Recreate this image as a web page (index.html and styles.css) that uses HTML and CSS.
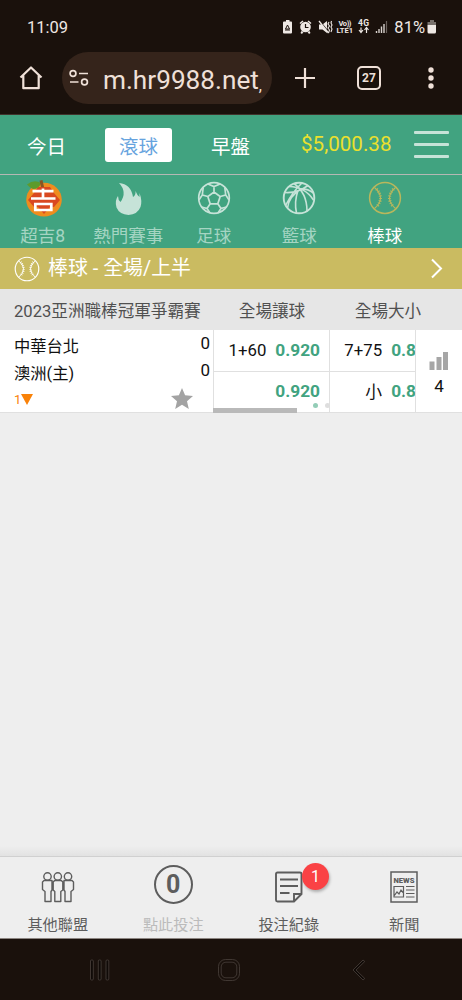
FILE: index.html
```html
<!DOCTYPE html>
<html lang="zh-Hant">
<head>
<meta charset="utf-8">
<meta name="viewport" content="width=device-width">
<title>棒球 - 全場/上半</title>
<link rel="stylesheet" href="styles.css">
</head>
<body>
<svg class="defs" width="0" height="0">
  <symbol id="baseball" viewBox="0 0 34 34">
    <g fill="none" stroke="currentColor"><circle cx="17" cy="17" r="15.4" stroke-width="1.5"/>
    <path d="M6.500 6.500Q18.500 17 6.500 27.500M27.500 6.500Q15.500 17 27.500 27.500" stroke-width="1.100"/>
    <path d="M8.500 8Q16.500 17 8.500 26M25.500 8Q17.500 17 25.500 26" stroke-width="3" stroke-dasharray="1 1.500"/></g>
  </symbol>
</svg>
<div class="phone">
  <header class="status">
    <span class="time">11:09</span>
    <svg class="status-icons" width="108" height="18" viewBox="0 0 108 18">
      <g fill="#eee8e4">
        <path d="M3 2.500h2V1h3.500v1.500h2v12H3Q2 14.500 2 13.500v-10Q2 2.500 3 2.500zM10 2.500q1 0 1 1v10q0 1-1 1z"/>
        <circle cx="24.500" cy="8" r="5.300"/><path d="M18.500 4l3-2.500 1 1-3 2.500zM30.500 4l-3-2.500-1 1 3 2.500zM20.500 12l2 1-1.500 2-1.500-1zM28.500 12l-2 1 1.500 2 1.500-1z"/>
        <path d="M38 5.500h3.500L46 2v12l-4.500-3.500H38z"/>
      </g>
      <path d="M4.500 10l2-4 2 4zM4 11h5" fill="none" stroke="#1a110c"/>
      <path d="M24.500 5v3.500h3" fill="none" stroke="#1a110c" stroke-width="1.200"/>
      <path d="M39 2.500l9 11" stroke="#1a110c" stroke-width="1.200"/>
      <path d="M38 2l9.500 12" stroke="#eee8e4" stroke-width="1.300"/>
      <path d="M48 3l-1 2 1.500 2-1.500 2 1.500 2-1 3M50.500 2l-.5 2 1 2-1 2 1 2-1 3" fill="none" stroke="#eee8e4" stroke-width="1.100"/>
      <g fill="#eee8e4" font-family="Roboto,sans-serif" font-weight="700"><text x="57.500" y="6.700" font-size="7.500" textLength="13">Vo))</text><text x="55.500" y="14.200" font-size="8" textLength="16.500" lengthAdjust="spacingAndGlyphs">LTE1</text><text x="77" y="7.200" font-size="8.500" textLength="11">4G</text></g>
      <path d="M80 8.500v5M78 11l2 2.500 2-2.500M85.500 14V9M83.500 11l2-2.500 2 2.500" fill="none" stroke="#eee8e4" stroke-width="1.200"/>
      <path d="M95.500 14v-2M98 14v-4M100.500 14V7.500M103 14V5" stroke="#d8d1cd" stroke-width="1.400"/><path d="M105.500 14V2" stroke="#6b625d" stroke-width="1.200"/>
    </svg>
    <span class="percent">81%</span>
    <svg width="10" height="15" viewBox="0 0 10 15"><path d="M3 0h4v2h2v3H.5V2H3z" fill="#77706b"/><path d="M.5 5H9v7q0 1.500-1.500 1.500H2Q.5 13.500.5 12z" fill="#eee8e4"/></svg>
  </header>
  <div class="browser">
    <svg class="home" width="24" height="24" viewBox="0 0 24 24"><path d="M1.500 11.500L12 1.500l10.500 10M4.300 9.500v12.700h15.400V9.500" fill="none" stroke="#efe0d8" stroke-width="2.200" stroke-linejoin="round"/></svg>
    <div class="url">
      <svg width="20" height="18" viewBox="0 0 20 18"><g fill="none" stroke="#efe0d8" stroke-width="1.700"><circle cx="4" cy="4.500" r="2.900"/><path d="M10 4.500h9M1 13h8.500"/><circle cx="15.500" cy="13" r="2.900"/></g></svg>
      <span class="host">m.hr9988.net</span><span class="cut">,</span>
    </div>
    <svg class="plus" width="22" height="22" viewBox="0 0 22 22"><path d="M11 1v20M1 11h20" stroke="#efe0d8" stroke-width="2.200"/></svg>
    <span class="tabs">27</span>
    <svg width="8" height="24" viewBox="0 0 8 24"><g fill="#efe0d8"><circle cx="4" cy="4" r="2.700"/><circle cx="4" cy="12" r="2.700"/><circle cx="4" cy="20" r="2.700"/></g></svg>
  </div>

  <nav class="top">
    <span class="day">今日</span><span class="day on">滾球</span><span class="day">早盤</span>
    <span class="money">$5,000.38</span>
    <span class="burger"><i></i><i></i><i></i></span>
  </nav>
  <nav class="sports">
    <div class="sport">
      <svg class="orange" width="38" height="37" viewBox="0 0 38 37"><ellipse cx="20" cy="19.700" rx="17.800" ry="16.900" fill="#ef8c1e"/><path d="M4 20l6-7 4-6h12l4 6 6 7-6 7h-4l-6 7-6-7h-4z" fill="#d94820"/><path d="M3 4.500Q10-1 17 3q-2 6-8 6Q6 8 3 4.500z" fill="#5d9b2c"/><path d="M15.500.8l3-.8 1.500 7h-3z" fill="#895522"/><path d="M8.500 11.200h21M19 8.500v10M7 18.500h24.500M11.300 24h16v6h-16z" fill="none" stroke="#fff" stroke-width="2.700"/></svg>
      <span>超吉8</span>
    </div>
    <div class="sport">
      <svg width="34" height="34" viewBox="0 0 34 34"><path d="M8 2Q20 3 22 16q3-2 2.500-6Q26 14 28.500 16v-4q3 8 1 14-3 7.500-12 8-9-.5-12-7.500-2-7 1.500-11.500 0 4 2.500 6 7-10-1.500-19z" fill="#c6e3d8"/></svg>
      <span>熱門賽事</span>
    </div>
    <div class="sport">
      <svg width="34" height="34" viewBox="0 0 34 34"><g fill="none" stroke="#c6e3d8" stroke-width="1.700"><circle cx="17" cy="17" r="15.300"/><path d="M17 11l6.200 4.500-2.400 7.300h-7.600l-2.400-7.300zM17 11V5.500M23.200 15.500l5.500-1.500M20.800 22.800l3.200 4.700M13.200 22.800L10 27.500M10.800 15.500L5.300 14M11 3l6 2.500L23 3M27.800 6.500L28.700 14l3.400 5M29.500 26l-5.500 1.500-3 4.500M4.500 26l5.500 1.500 3 4.500M1.900 19l3.400-5 .9-7.500"/></g></svg>
      <span>足球</span>
    </div>
    <div class="sport">
      <svg width="34" height="34" viewBox="0 0 34 34"><g fill="none" stroke="#c6e3d8" stroke-width="1.600"><circle cx="17" cy="17" r="15.300" stroke-width="1.900"/><path d="M3 11.500Q15 12.500 26 4.500M7 5.500Q23 6 31.500 19M12 2.500Q25 12 25 30M20 2Q11 10 3.500 24.500M5.500 27Q7 15 19 8M14.500 32Q12 21 16 9.500M31.500 12Q25 7 17 8"/></g></svg>
      <span>籃球</span>
    </div>
    <div class="sport on">
      <svg width="34" height="34"><use href="#baseball"/></svg>
      <span>棒球</span>
    </div>
  </nav>

  <div class="title">
    <svg width="26" height="26"><use href="#baseball"/></svg>
    <span>棒球 - 全場/上半</span>
    <svg class="chev" width="13" height="21" viewBox="0 0 13 21"><path d="M2 1.500l9 9-9 9" fill="none" stroke="#fff" stroke-width="2"/></svg>
  </div>
  <div class="cols"><span class="league">2023亞洲職棒冠軍爭霸賽</span><span class="col">全場讓球</span><span class="col">全場大小</span></div>
  <section class="match">
    <div class="teams">
      <div class="team"><span>中華台北</span><b>0</b></div>
      <div class="team"><span>澳洲(主)</span><b>0</b></div>
      <div class="meta"><span>1</span><svg class="tri" width="12" height="11" viewBox="0 0 12 11"><path d="M0 0h12L6 11z" fill="#f98209"/></svg>
        <svg class="star" width="22" height="21" viewBox="0 0 22 21"><path d="M11 0l3.100 7.300 7.900.7-6 5.200 1.800 7.700L11 16.800l-6.800 4.100L6 13.200 0 8l7.900-.7z" fill="#a3a3a3"/></svg></div>
    </div>
    <div class="odds">
      <div class="cell"><span>1+60</span><b>0.920</b></div>
      <div class="cell"><b>0.920</b></div>
    </div>
    <div class="odds cropped">
      <div class="cell"><span>7+75</span><b>0.8</b></div>
      <div class="cell"><span>小</span><b>0.8</b></div>
    </div>
    <div class="more"><svg width="20" height="18" viewBox="0 0 20 18"><path d="M.5 9.500h5V18h-5zM7.500 5h5v13h-5zM14 0h5v18h-5z" fill="#a6a6a6"/></svg><span>4</span></div>
    <div class="scroll"></div>
    <div class="dots"><i></i><i></i></div>
  </section>
  <main class="blank"></main>

  <nav class="bottom">
    <div class="tab">
      <svg class="people" width="34" height="40" viewBox="0 0 34 40"><g fill="none" stroke="#5d5d5d" stroke-width="1.400" stroke-linejoin="round"><circle cx="6.500" cy="9.500" r="3.700"/><circle cx="16.800" cy="9.500" r="3.700"/><circle cx="27" cy="9.500" r="3.700"/><path d="M3 13.500h8v9.500l-1 1.500v10H4V24.500l-2.500-2V15zM12.200 15l1.500-1.500h6.600l1.500 1.500v8l-2 1.500v10h-6v-10l-1.600-1.500zM23 13.500h8l1.500 1.500v7.500l-2.500 2v10h-6v-10l-1-1.500z"/></g></svg>
      <span>其他聯盟</span></div>
    <div class="tab off"><div class="count">0</div><span>點此投注</span></div>
    <div class="tab">
      <svg width="28" height="40" viewBox="0 0 28 40"><path d="M2.500 6.500q-1.500 0-1.500 1.500v26q0 1.500 1.500 1.500H19l7.500-7.500V8q0-1.500-1.500-1.500zM19 35.500V28h7.500M5 13.500h18M5 20h18M5 27h9.500" fill="none" stroke="#5d5d5d" stroke-width="1.900"/></svg>
      <em class="badge">1</em>
      <span>投注紀錄</span></div>
    <div class="tab">
      <svg width="28" height="40" viewBox="0 0 28 40"><path d="M1 6h26v30H1z" fill="none" stroke="#5d5d5d" stroke-width="1.500"/><text x="3.500" y="16.500" font-family="Roboto,sans-serif" font-weight="900" font-size="7.500" textLength="21" lengthAdjust="spacingAndGlyphs" fill="#5d5d5d">NEWS</text><path d="M4 20.500h9.500V31H4zM4 30l3-4 2 2 2-4 2.500 3M16 20.500h8.500M16 24h8.500M16 27.500h8.500M16 31h8.500" fill="none" stroke="#5d5d5d" stroke-width="1.200"/></svg>
      <span>新聞</span></div>
  </nav>
  <footer class="system">
    <svg width="22" height="22" viewBox="0 0 22 22"><g fill="#100a07" stroke="#4a413c" stroke-width=".8"><rect x="1.500" y="1" width="2.800" height="20" rx="1"/><rect x="9.300" y="1" width="2.800" height="20" rx="1"/><rect x="17" y="1" width="2.800" height="20" rx="1"/></g></svg>
    <svg width="24" height="24" viewBox="0 0 24 24"><g fill="none" stroke="#4a413c" stroke-width=".8"><rect x="1.500" y="1.500" width="21" height="21" rx="7"/><rect x="4.200" y="4.200" width="15.600" height="15.600" rx="4.700"/></g></svg>
    <svg width="16" height="24" viewBox="0 0 16 24"><path d="M12 2l1.800 1.500L5 12l8.800 8.500L12 22 2 12z" fill="#100a07" stroke="#4a413c" stroke-width=".8"/></svg>
  </footer>
</div>
</body>
</html>
```

FILE: styles.css
```css
* { box-sizing: border-box; }
body { margin: 0; font-family: Roboto, "Noto Sans CJK TC", sans-serif; }
svg { display: block; flex: none; }
span { white-space: nowrap; }
.defs { position: absolute; }
.phone { width: 462px; height: 1000px; display: flex; flex-direction: column; overflow: hidden; background: #1a110c; }
.phone > * { flex: none; }

.status { height: 52px; display: flex; align-items: center; padding: 2px 25px 0 27px; color: #efe8e4; font-size: 16.5px; }
.status-icons { margin: 2px 5px 0 auto; }
.percent { margin-right: 2px; }
.browser { height: 63px; display: flex; align-items: flex-start; border-bottom: 1px solid #40332c; padding-left: 19px; color: #efe0d8; }
.home { margin: 14px 19px 0 0; }
.browser > svg:last-child { margin: 14px 0 0 46px; }
.url { width: 210px; height: 52px; border-radius: 26px; background: #35241b; display: flex; align-items: center; padding-left: 7px; }
.host { font-size: 26.2px; margin-left: 14px; padding-top: 3px; }
.cut { font-size: 16px; padding-top: 14px; }
.plus { margin: 15px 0 0 22px; }
.tabs { margin: 14px 0 0 41px; width: 24px; height: 24px; border: 2px solid #efe0d8; border-radius: 5px; font-size: 12px; font-weight: 700; line-height: 20px; text-align: center; }

.top { height: 60px; background: #41a380; border-bottom: 1px solid #b5b8b4; display: flex; align-items: center; padding-left: 13px; color: #fff; }
.day { width: 67px; height: 34px; line-height: 39px; font-size: 19.5px; text-align: center; margin-right: 25px; border-radius: 3px; }
.day.on { background: #fff; color: #66a3de; }
.money { width: 92px; margin: -2px 0 0 12px; color: #ebe02d; font-size: 20.6px; }
.burger { margin-left: 21px; width: 35px; display: flex; flex-direction: column; gap: 9px; }
.burger i { height: 3px; border-radius: 1px; background: #c6e3d8; }
.sports { height: 73px; background: #41a380; display: flex; }
.sport { width: 85.5px; display: flex; flex-direction: column; align-items: center; padding-top: 6px; color: #a5d5c3; font-size: 17.5px; line-height: 24px; }
.sport svg { height: 34px; }
.sport .orange { height: 37px; margin: -1px 0 -2px; }
.sport span { margin-top: 9px; }
.sport.on svg { color: #b9b75c; }
.sport.on span { color: #fff; }

.title { height: 41px; background: #cabb61; display: flex; align-items: center; color: #fff; padding: 0 19px 0 14px; font-size: 19.9px; }
.title span { margin-left: 8px; line-height: 38px; }
.chev { margin-left: auto; }
.cols { height: 41px; background: #e6e6e6; color: #505050; display: flex; font-size: 16.6px; line-height: 45px; padding-left: 14px; }
.league { width: 200px; }
.col { width: 116px; text-align: center; }
.match { height: 83px; display: flex; background: #fff; position: relative; border-bottom: 1px solid #e0e0e0; color: #111; font-size: 16.3px; }
.teams { width: 213px; padding: 3px 3px 0 14px; }
.team { height: 27px; display: flex; justify-content: space-between; line-height: 28px; }
.team b { font-weight: 400; line-height: 20px; font-size: 17px; }
.meta { display: flex; align-items: center; color: #f98209; font-size: 13px; height: 24px; }
.star { margin: -2px 17px 0 auto; }
.odds { width: 116px; border-left: 1px solid #e0e0e0; }
.cell { height: 41px; display: flex; justify-content: flex-end; align-items: center; gap: 9px; padding: 0 9px 2px 0; }
.cell span { font-size: 16.8px; }
.cell + .cell { border-top: 1px solid #e0e0e0; }
.cell b { color: #41a380; font-weight: 700; font-size: 17.3px; }
.cropped { width: 87px; }
.cropped .cell { padding-right: 0; }
.more { flex: 1; border-left: 1px solid #e0e0e0; margin-left: -1px; display: flex; flex-direction: column; align-items: center; padding-top: 22px; font-size: 17px; }
.more span { margin-top: 6px; }
.scroll { position: absolute; left: 213px; bottom: -1px; width: 84px; height: 5px; background: #b9b9b9; }
.dots { position: absolute; left: 313px; top: 73px; display: flex; gap: 7px; }
.dots i { width: 5px; height: 5px; border-radius: 50%; background: #93cdb7; }
.dots i + i { background: #dedede; }
.blank { height: 443px; background: linear-gradient(#eee 0 433px, #e2e2e2); }

.bottom { height: 83px; background: #eee; border-top: 1px solid #d0d0d0; border-bottom: 1px solid #8c8581; display: flex; color: #5d5d5d; }
.tab { width: 115.5px; display: flex; flex-direction: column; align-items: center; padding-top: 9px; font-size: 15.2px; position: relative; }
.tab span { margin-top: 8px; line-height: 22px; }
.people { margin: 1px 0 -1px; }
.off { color: #bbb; }
.count { width: 39px; height: 39px; margin: -1px 0 2px; border: 2px solid #5d5d5d; border-radius: 50%; color: #5d5d5d; font-size: 25px; font-weight: 700; line-height: 35px; text-align: center; }
.badge { position: absolute; left: 71px; top: 6px; width: 27px; height: 27px; border-radius: 50%; background: #fa4245; color: #fff; font-size: 16px; font-style: normal; line-height: 27px; text-align: center; box-shadow: 1px 2px 3px #0004; }
.system { height: 61px; display: flex; align-items: center; padding-left: 89px; }
.system svg + svg { margin-left: 106px; }
.system svg:last-child { margin-left: 110px; }
```
